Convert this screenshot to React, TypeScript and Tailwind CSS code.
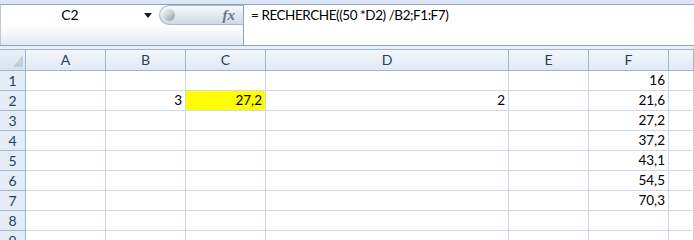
const cols = ["A", "B", "C", "D", "E", "F", ""];
const widths = ["w-[80px]", "w-[80px]", "w-[80px]", "w-[243px]", "w-[80px]", "w-[80px]", "flex-1"];

const data: Record<string, string> = {
	B2: "3",
	C2: "27,2",
	D2: "2",
	F1: "16",
	F2: "21,6",
	F3: "27,2",
	F4: "37,2",
	F5: "43,1",
	F6: "54,5",
	F7: "70,3",
};

function FormulaBar() {
	return (
		<div className="flex h-[41px] border-b border-[#8ea4c0] bg-white">
			<div className="flex w-[244px] flex-col border-r border-[#8ea4c0]">
				<div className="flex h-[20px]">
					<div className="relative flex w-[159px] items-center justify-center border-l border-[#b9c7d8] bg-white text-[14px] text-black">
						<span className="mr-[20px] leading-none">C2</span>
						<svg className="absolute right-[7px] top-[8px]" width="8" height="5" viewBox="0 0 8 5">
							<path d="M0 0h8L4 5z" fill="#1b1b1b" />
						</svg>
					</div>
					<div className="relative flex flex-1 items-center justify-end rounded-l-full border border-r-0 border-[#a9b9cd] bg-gradient-to-b from-[#f7f9fc] via-[#e3e9f1] to-[#cfd9e6] pr-[8px]">
						<div className="absolute left-[3px] top-[3px] h-[12px] w-[12px] rounded-full bg-gradient-to-br from-[#f4f4f4] via-[#c9ccd1] to-[#8d939c]" />
						<span className="font-['Liberation_Serif',serif] text-[15px] font-bold italic leading-none text-[#6b7686]">
							fx
						</span>
					</div>
				</div>
				<div className="flex-1 border-l border-[#b9c7d8] bg-gradient-to-b from-[#ffffff] to-[#e4e9f0]" />
			</div>
			<div className="flex-1 pl-[7px] pt-[4px] text-[13.5px] leading-none tracking-[-0.45px] text-black">
				= RECHERCHE((50 *D2) /B2;F1:F7)
			</div>
		</div>
	);
}

function HeaderRow() {
	return (
		<div className="flex h-[21px] border-b border-[#9eb6ce] bg-gradient-to-b from-[#f3f6fb] to-[#e2e9f3] text-[14px] text-[#243f62]">
			<div className="relative w-[26px] border-r border-[#9eb6ce] bg-gradient-to-b from-[#e9eff7] to-[#d9e3ef]">
				<svg className="absolute bottom-[3px] right-[2px]" width="10" height="12" viewBox="0 0 10 12">
					<path d="M10 0v12H0z" fill="#c3cedc" />
				</svg>
			</div>
			{cols.map((c, i) => (
				<div
					key={i}
					className={`${widths[i]} flex items-center justify-center border-r border-[#9eb6ce] leading-none`}
				>
					{c}
				</div>
			))}
		</div>
	);
}

function Row({ n }: { n: number }) {
	return (
		<div className="flex h-[20px] border-b border-[#d0d7e5] text-[13.5px]">
			<div className="-mb-px flex w-[26px] items-center justify-center border-r border-b border-[#9eb6ce] bg-[#e4ecf7] text-[14px] leading-none text-[#243f62]">
				{n}
			</div>
			{cols.map((c, i) => {
				const key = `${c}${n}`;
				const yellow = key === "C2";
				return (
					<div
						key={i}
						className={`${widths[i]} flex items-center justify-end border-r border-[#d0d7e5] pr-[3px] leading-none text-black ${
							yellow ? "bg-[#ffff00]" : "bg-white"
						}`}
					>
						{c ? data[key] ?? "" : ""}
					</div>
				);
			})}
		</div>
	);
}

export default function App() {
	return (
		<div className="h-[240px] w-[694px] overflow-hidden bg-white font-['Lato','Carlito',sans-serif]">
			<div className="h-[5px] border-b border-[#8ea4c0] bg-[#dce6f4]" />
			<FormulaBar />
			<div className="h-[4px] border-b border-[#9eb6ce] bg-[#e8eef7]" />
			<HeaderRow />
			{[1, 2, 3, 4, 5, 6, 7, 8, 9].map((n) => (
				<Row key={n} n={n} />
			))}
		</div>
	);
}
